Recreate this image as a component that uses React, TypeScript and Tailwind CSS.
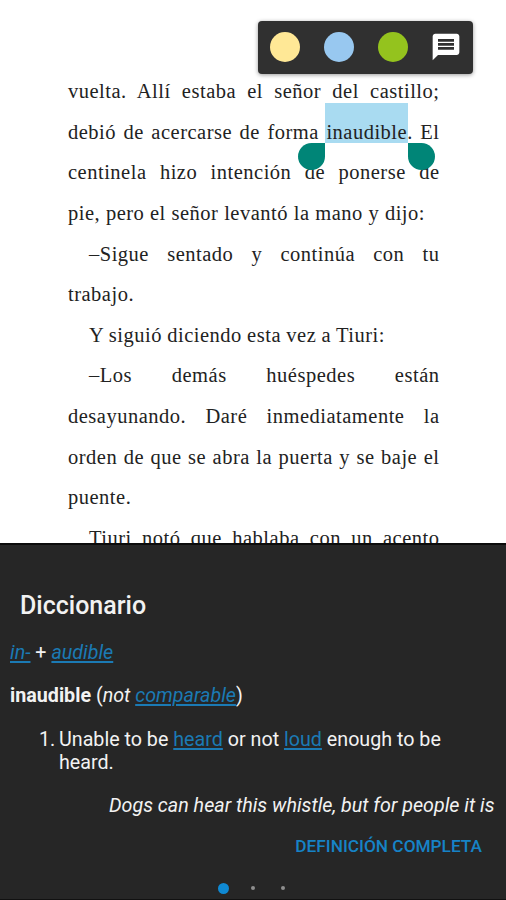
import React from 'react';
import { MdMessage } from 'react-icons/md';
import { clsx } from 'clsx';

type Line = {
  text: React.ReactNode;
  className?: string;
};

const swatches = ['bg-[#ffe896]', 'bg-[#98c8f0]', 'bg-[#94c31e]'];

const SelectedWord: React.FC = () => (
  <span className="relative inline-block">
    <span className="absolute -left-px -right-px -top-[9px] h-[40px] bg-[#a9dbf1]" />
    <span className="relative">inaudible</span>
    {/* Selection handles hang below the word */}
    <span className="absolute right-full top-[31px] z-10 mr-px h-[27px] w-[27px] rounded-full rounded-tr-none bg-[#008577]" />
    <span className="absolute left-full top-[31px] z-10 ml-px h-[27px] w-[27px] rounded-full rounded-tl-none bg-[#008577]" />
  </span>
);

const lines: Line[] = [
  { text: 'vuelta. Allí estaba el señor del castillo;' },
  { text: <>debió de acercarse de forma <SelectedWord />. El</> },
  { text: 'centinela hizo intención de ponerse de' },
  { text: 'pie, pero el señor levantó la mano y dijo:', className: 'w-[357px]' },
  { text: '–Sigue sentado y continúa con tu', className: 'pl-[21px]' },
  { text: 'trabajo.', className: 'w-[66px]' },
  { text: 'Y siguió diciendo esta vez a Tiuri:', className: 'w-[317px] pl-[21px]' },
  { text: '–Los demás huéspedes están', className: 'pl-[21px]' },
  { text: 'desayunando. Daré inmediatamente la' },
  { text: 'orden de que se abra la puerta y se baje el' },
  { text: 'puente.', className: 'w-[64px]' },
  { text: 'Tiuri notó que hablaba con un acento', className: 'pl-[21px]' },
];

const WordLink: React.FC<{ children: React.ReactNode }> = ({ children }) => (
  <a href="#" className="text-[#1b7ab4] underline decoration-[1.5px] underline-offset-2">{children}</a>
);

const App: React.FC = () => {
  return (
    <div className="relative flex h-[900px] w-[506px] flex-col overflow-hidden bg-white">
      {/* Book page */}
      <main className="h-[543px] overflow-hidden pl-[68px] pt-[71px] font-['Liberation_Serif',serif] text-[20.5px] tracking-[0.5px] [word-spacing:-2px] text-[#222]">
        {lines.map((line, i) => (
          <p
            key={i}
            className={clsx(
              'h-[40.65px] whitespace-nowrap leading-[40.65px] [text-align-last:justify]',
              line.className?.includes('w-[') ? line.className : clsx('w-[371.5px]', line.className)
            )}
          >
            {line.text}
          </p>
        ))}
      </main>

      {/* Highlight toolbar */}
      <div className="absolute left-[257.5px] top-[20.5px] flex h-[53.5px] w-[215px] items-center gap-[24px] rounded-[4px] bg-[#303030] pl-[12px] shadow-[0_1px_4px_rgba(0,0,0,0.4)]">
        {swatches.map(color => (
          <button key={color} className={clsx('h-[30px] w-[30px] rounded-full', color)} />
        ))}
        <button className="-ml-[2px]">
          <MdMessage size={32} className="text-white" />
        </button>
      </div>

      {/* Dictionary panel */}
      <section className="h-[357px] border-b border-t-2 border-b-[#111] border-t-[#0c0c0c] bg-[#262626] font-[Roboto,sans-serif] text-[19.7px] leading-[23px] text-[#f2f2f2]">
        <h2 className="mt-[46px] pl-[20px] text-[25px] font-medium leading-[30px]">Diccionario</h2>
        <p className="mt-[20px] pl-[10px]">
          <i><WordLink>in-</WordLink></i> + <i><WordLink>audible</WordLink></i>
        </p>
        <p className="mt-[20px] pl-[10px]">
          <b>inaudible</b> (<i>not <WordLink>comparable</WordLink></i>)
        </p>
        <div className="mt-[21px] flex whitespace-nowrap pl-[39px]">
          <span className="w-[20px]">1.</span>
          <p>
            Unable to be <WordLink>heard</WordLink> or not <WordLink>loud</WordLink> enough to be
            <br />
            heard.
          </p>
        </div>
        <p className="mt-[20px] whitespace-nowrap pl-[109px] italic">Dogs can hear this whistle, but for people it is</p>
        <div className="mt-[18px] flex justify-end pr-[24px]">
          <button className="text-[17.25px] font-medium leading-[23px] text-[#1683c6]">DEFINICIÓN COMPLETA</button>
        </div>
        <div className="mt-[25px] flex h-[10px] items-center pl-[218px]">
          <span className="h-[11px] w-[11px] rounded-full bg-[#0f89d3]" />
          <span className="ml-[22px] h-[4px] w-[4px] rounded-full bg-[#8f8f8f]" />
          <span className="ml-[26px] h-[4px] w-[4px] rounded-full bg-[#8f8f8f]" />
        </div>
      </section>
    </div>
  );
};

export default App;
